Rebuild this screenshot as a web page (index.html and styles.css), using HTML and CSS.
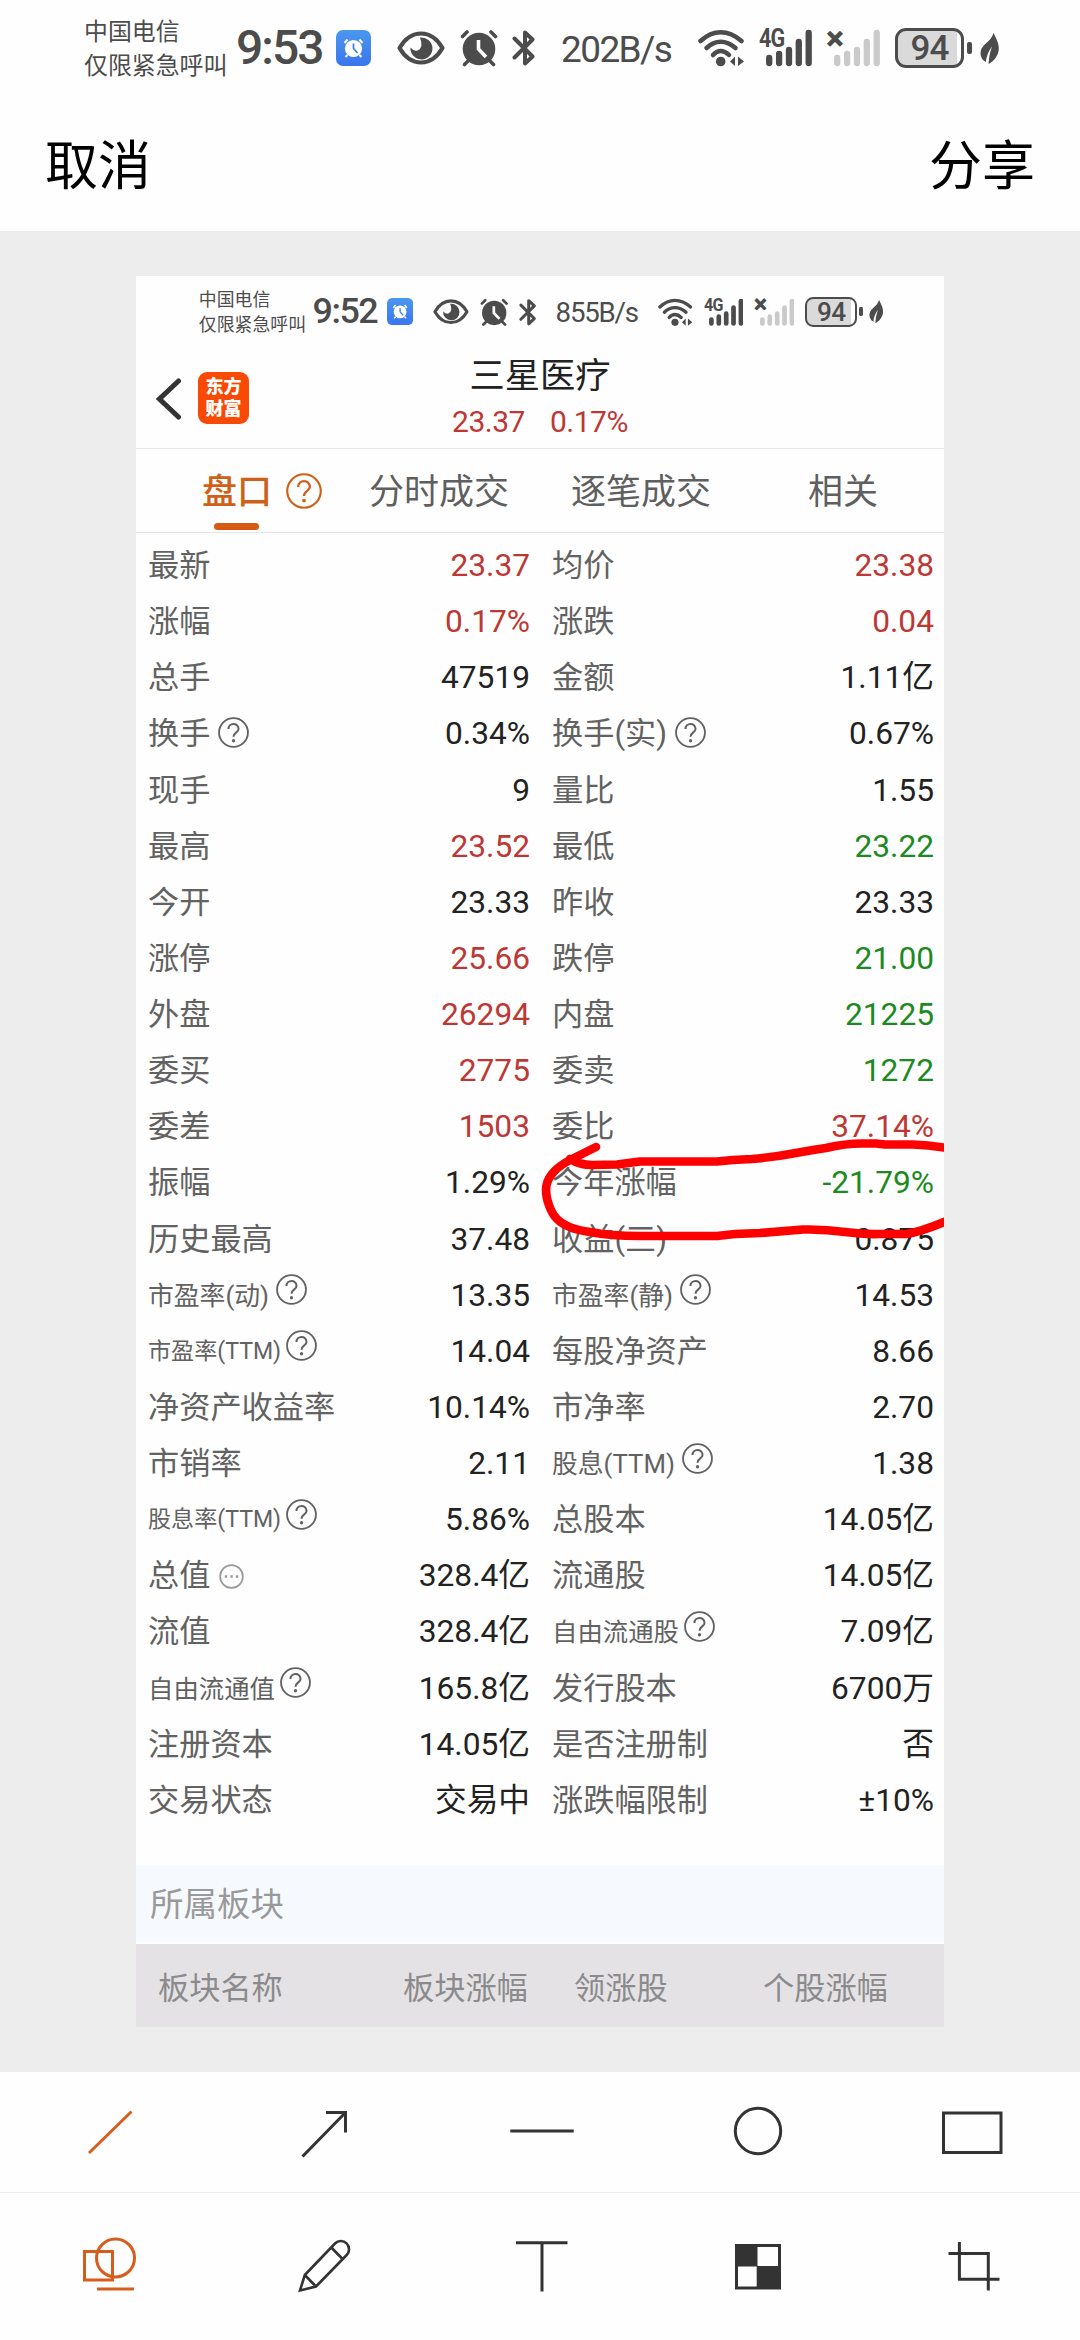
FILE: index.html
```html
<!DOCTYPE html>
<html lang="zh-CN">
<head>
    <meta charset="UTF-8">
    <meta name="viewport" content="width=device-width, initial-scale=1.0">
    <title>分享截图</title>
    <link rel="stylesheet" href="styles.css">
</head>
<body>

    <!-- Shared icons -->
    <svg class="sprite">
        <defs>
            <linearGradient id="blue" x1="0" y1="0" x2="0" y2="1">
                <stop offset="0" stop-color="#4b97ef"/>
                <stop offset="1" stop-color="#3a75ee"/>
            </linearGradient>
        </defs>
        <symbol id="i-alarm" viewBox="0 0 38 38">
            <circle cx="19" cy="20" r="16.3" fill="currentColor"/>
            <path d="M2.5 7.5L7 3M35.5 7.5L31 3M8 32L4.500 35.500M30 32L33.500 35.500" fill="none" stroke="currentColor" stroke-width="3.600" stroke-linecap="round"/>
            <path class="hand" d="M18.500 11V20L26 28" fill="none" stroke-width="3.600"/>
        </symbol>
        <symbol id="i-app" viewBox="0 0 35 36">
            <rect width="35" height="36" rx="7" fill="url(#blue)"/>
            <circle cx="17.500" cy="18.500" r="8.600" fill="#fff"/>
            <path d="M8.500 13L11.500 9.500M26.500 13L23.500 9.500M11.500 25L9.500 27M23.500 25L25.500 27" stroke="#fff" stroke-width="2"/>
            <path d="M17.500 13.500V18.500L21.500 23" fill="none" stroke="#3f82ee" stroke-width="1.800"/>
        </symbol>
        <symbol id="i-eye" viewBox="0 0 48 34">
            <path d="M2.500 17Q11 2.500 24 2.500T45.500 17Q37 31.500 24 31.500T2.500 17Z" fill="none" stroke="currentColor" stroke-width="4.200" stroke-linejoin="round"/>
            <path d="M23 6.500A11 11 0 1 1 13.500 16.500Q16.500 20.500 20.500 19.500Q27 17 23 6.500Z" fill="currentColor"/>
        </symbol>
        <symbol id="i-bt" viewBox="0 0 24 38">
            <path d="M2.500 9.500L20.500 27.500L13 34.500V3.500L20.500 10.500L2.500 28.500" fill="none" stroke="currentColor" stroke-width="4" stroke-linecap="round" stroke-linejoin="round"/>
        </symbol>
        <symbol id="i-wifi" viewBox="0 0 46 38">
            <g fill="none" stroke="currentColor" stroke-width="4.500" stroke-linecap="round">
                <path d="M2.500 12Q12 3.200 22.700 3.200T43.500 12"/>
                <path d="M8.500 19Q15 12.800 22.700 12.800T37.500 19"/>
                <path d="M15 26Q18.500 22 22.700 22T31 26"/>
            </g>
            <circle cx="22.700" cy="32.500" r="4.800" fill="currentColor"/>
            <path d="M37 27.500V37L32 32.500ZM40 27.500V37L46 32.500Z" fill="currentColor"/>
        </symbol>
        <symbol id="i-bars" viewBox="0 0 46 38">
            <path d="M3.200 29V34M13.100 25V34M23 21V34M32.800 13V34M42.700 4V34" stroke="currentColor" stroke-width="6.300" stroke-linecap="round"/>
        </symbol>
        <symbol id="i-leaf" viewBox="0 0 20 31">
            <path d="M13.500 0C17 7 19 11 18.800 16C18.500 23 13 29 8.500 31C9 25 9.500 20 12 13.500C8.500 18 6.500 23 5.800 29C1.500 27 0 22 .8 18C2 11 11 9 13.500 0Z" fill="currentColor"/>
        </symbol>
        <symbol id="i-help" viewBox="0 0 32 32">
            <circle cx="16" cy="16" r="14.900" fill="none" stroke="currentColor" stroke-width="1.900"/>
            <path d="M10.800 12.500C10.800 5.500 21.200 5.500 21.200 12.300C21.200 16 16 15.800 16 20.500" fill="none" stroke="currentColor" stroke-width="2.100"/>
            <circle cx="16" cy="24.500" r="1.700" fill="currentColor"/>
        </symbol>
    </svg>

    <div class="status-bar">
        <div class="carrier">中国电信<br>仅限紧急呼叫</div>
        <div class="time">9:53</div>
        <svg class="s-app"><use href="#i-app"/></svg>
        <svg class="s-eye"><use href="#i-eye"/></svg>
        <svg class="s-alarm"><use href="#i-alarm"/></svg>
        <svg class="s-bt"><use href="#i-bt"/></svg>
        <div class="speed">202B/s</div>
        <svg class="s-wifi"><use href="#i-wifi"/></svg>
        <div class="signal"><span class="net">4G</span><svg><use href="#i-bars"/></svg></div>
        <div class="signal none"><span class="net">×</span><svg><use href="#i-bars"/></svg></div>
        <div class="battery">94</div>
        <svg class="s-leaf"><use href="#i-leaf"/></svg>
    </div>

    <div class="nav">
        <span>取消</span>
        <span>分享</span>
    </div>

    <div class="canvas">
        <div class="shot">
            <div class="status-bar small">
                <div class="carrier">中国电信<br>仅限紧急呼叫</div>
                <div class="time">9:52</div>
                <svg class="s-app"><use href="#i-app"/></svg>
                <svg class="s-eye"><use href="#i-eye"/></svg>
                <svg class="s-alarm"><use href="#i-alarm"/></svg>
                <svg class="s-bt"><use href="#i-bt"/></svg>
                <div class="speed">855B/s</div>
                <svg class="s-wifi"><use href="#i-wifi"/></svg>
                <div class="signal"><span class="net">4G</span><svg><use href="#i-bars"/></svg></div>
                <div class="signal none"><span class="net">×</span><svg><use href="#i-bars"/></svg></div>
                <div class="battery">94</div>
                <svg class="s-leaf"><use href="#i-leaf"/></svg>
            </div>

            <div class="stock-header">
                <div class="header-left">
                    <svg class="back" viewBox="0 0 26 42"><path d="M22.500 3L3.500 21L22.500 39" fill="none" stroke="#333" stroke-width="5" stroke-linecap="round"/></svg>
                    <div class="logo">东方<br>财富</div>
                </div>
                <div class="header-title">
                    <div class="name">三星医疗</div>
                    <div class="price"><span>23.37</span><span>0.17%</span></div>
                </div>
                <div class="header-right"></div>
            </div>

            <div class="tabs">
                <div class="tab active">盘口<svg class="tab-help"><use href="#i-help"/></svg></div>
                <div class="tab">分时成交</div>
                <div class="tab">逐笔成交</div>
                <div class="tab">相关</div>
            </div>

            <div class="quotes">
                <div class="cell"><span>最新</span><b class="up">23.37</b></div>
                <div class="cell"><span>均价</span><b class="up">23.38</b></div>
                <div class="cell"><span>涨幅</span><b class="up">0.17%</b></div>
                <div class="cell"><span>涨跌</span><b class="up">0.04</b></div>
                <div class="cell"><span>总手</span><b>47519</b></div>
                <div class="cell"><span>金额</span><b>1.11亿</b></div>
                <div class="cell"><span>换手</span><svg class="help"><use href="#i-help"/></svg><b>0.34%</b></div>
                <div class="cell"><span>换手(实)</span><svg class="help"><use href="#i-help"/></svg><b>0.67%</b></div>
                <div class="cell"><span>现手</span><b>9</b></div>
                <div class="cell"><span>量比</span><b>1.55</b></div>
                <div class="cell"><span>最高</span><b class="up">23.52</b></div>
                <div class="cell"><span>最低</span><b class="down">23.22</b></div>
                <div class="cell"><span>今开</span><b>23.33</b></div>
                <div class="cell"><span>昨收</span><b>23.33</b></div>
                <div class="cell"><span>涨停</span><b class="up">25.66</b></div>
                <div class="cell"><span>跌停</span><b class="down">21.00</b></div>
                <div class="cell"><span>外盘</span><b class="up">26294</b></div>
                <div class="cell"><span>内盘</span><b class="down">21225</b></div>
                <div class="cell"><span>委买</span><b class="up">2775</b></div>
                <div class="cell"><span>委卖</span><b class="down">1272</b></div>
                <div class="cell"><span>委差</span><b class="up">1503</b></div>
                <div class="cell"><span>委比</span><b class="up">37.14%</b></div>
                <div class="cell"><span>振幅</span><b>1.29%</b></div>
                <div class="cell"><span>今年涨幅</span><b class="down">-21.79%</b></div>
                <div class="cell"><span>历史最高</span><b>37.48</b></div>
                <div class="cell"><span>收益(三)</span><b>0.875</b></div>
                <div class="cell mid"><span>市盈率(动)</span><svg class="help"><use href="#i-help"/></svg><b>13.35</b></div>
                <div class="cell mid"><span>市盈率(静)</span><svg class="help"><use href="#i-help"/></svg><b>14.53</b></div>
                <div class="cell tiny"><span>市盈率(TTM)</span><svg class="help"><use href="#i-help"/></svg><b>14.04</b></div>
                <div class="cell"><span>每股净资产</span><b>8.66</b></div>
                <div class="cell"><span>净资产收益率</span><b>10.14%</b></div>
                <div class="cell"><span>市净率</span><b>2.70</b></div>
                <div class="cell"><span>市销率</span><b>2.11</b></div>
                <div class="cell mid"><span>股息(TTM)</span><svg class="help"><use href="#i-help"/></svg><b>1.38</b></div>
                <div class="cell tiny"><span>股息率(TTM)</span><svg class="help"><use href="#i-help"/></svg><b>5.86%</b></div>
                <div class="cell"><span>总股本</span><b>14.05亿</b></div>
                <div class="cell"><span>总值</span><svg class="more" viewBox="0 0 26 26"><circle cx="13" cy="13" r="11.800" fill="none" stroke="#999" stroke-width="1.800"/><path d="M6 13h2.500M11.800 13h2.500M17.500 13h2.500" stroke="#999" stroke-width="2.500"/></svg><b>328.4亿</b></div>
                <div class="cell"><span>流通股</span><b>14.05亿</b></div>
                <div class="cell"><span>流值</span><b>328.4亿</b></div>
                <div class="cell free"><span>自由流通股</span><svg class="help"><use href="#i-help"/></svg><b>7.09亿</b></div>
                <div class="cell free"><span>自由流通值</span><svg class="help"><use href="#i-help"/></svg><b>165.8亿</b></div>
                <div class="cell"><span>发行股本</span><b>6700万</b></div>
                <div class="cell"><span>注册资本</span><b>14.05亿</b></div>
                <div class="cell"><span>是否注册制</span><b>否</b></div>
                <div class="cell"><span>交易状态</span><b>交易中</b></div>
                <div class="cell"><span>涨跌幅限制</span><b>±10%</b></div>
            </div>

            <div class="section-title">所属板块</div>
            <div class="board-head">
                <span class="c1">板块名称</span>
                <span class="c2">板块涨幅</span>
                <span class="c3">领涨股</span>
                <span class="c4">个股涨幅</span>
            </div>

            <!-- Hand-drawn mark -->
            <svg class="mark" viewBox="536 1136 408 108">
                <path d="M596 1147L572 1159C558 1166 546 1176 546 1190C546 1200 551 1213 557 1219C563 1225 575 1230 590 1232C605 1235 620 1236 640 1236H717L735 1234L760 1233L803 1229.500Q825 1229 845 1232Q862 1234.500 880 1234H906Q920 1232 944 1222L960 1216"/>
                <path d="M570 1159Q580 1165 592 1165L617 1164.500L640 1161.500H717L733 1160L752 1159Q775 1157 793 1153.500L813 1150L826 1148Q845 1143.500 862 1143.500H876L885 1144.500H913Q928 1145 944 1147.500L960 1150"/>
            </svg>
        </div>
    </div>

    <div class="tools shapes">
        <div class="tool active"><svg viewBox="0 0 80 80"><path d="M21 61L63.500 19.500"/></svg></div>
        <div class="tool"><svg viewBox="0 0 80 80"><path d="M18.500 64.500L61.500 20.500M42 20.500H61.500V40.500"/></svg></div>
        <div class="tool"><svg viewBox="0 0 80 80"><path d="M10.300 39H73.700"/></svg></div>
        <div class="tool"><svg viewBox="0 0 80 80"><circle cx="42" cy="39" r="22.700"/></svg></div>
        <div class="tool"><svg viewBox="0 0 80 80"><rect x="11.500" y="21" width="57.500" height="39.500"/></svg></div>
    </div>
    <div class="tools modes">
        <div class="tool active"><svg viewBox="0 0 80 80"><rect x="16.500" y="25.500" width="28" height="28.500"/><circle cx="47.500" cy="32" r="19"/><path d="M29 63H66"/></svg></div>
        <div class="tool thin"><svg viewBox="0 0 80 80"><path d="M16 64.500L20.800 49L51 17.500A8.200 8.200 0 0 1 62.700 29L32 60.500ZM20.800 49L32 60.500M47.300 21.500L58.600 33"/></svg></div>
        <div class="tool"><svg viewBox="0 0 80 80"><path d="M16 16.700H67.500M42 16.700V65.500"/></svg></div>
        <div class="tool"><svg viewBox="0 0 80 80"><rect x="20.500" y="19.500" width="43" height="42.500"/><path class="fill" d="M20 19H41.500V62H20ZM41.500 40H63V62H41.500Z"/><path class="blank" d="M22 40.500H40.700V60.500H22Z"/></svg></div>
        <div class="tool"><svg viewBox="0 0 80 80"><path d="M27.400 16V53.200H67.500M16.500 27.400H56.300V64.500"/></svg></div>
    </div>

</body>
</html>
```
FILE: styles.css
```css
* {
    box-sizing: border-box;
}

body {
    margin: 0;
    width: 1080px;
    height: 2340px;
    display: flex;
    flex-direction: column;
    overflow: hidden;
    font-family: Roboto, "Noto Sans CJK SC", sans-serif;
    background: #fefefe;
    color: #222;
}

svg {
    display: block;
    flex-shrink: 0;
}

.sprite {
    position: absolute;
    width: 0;
    height: 0;
}

/* Status bar */
.status-bar {
    width: 1080px;
    height: 96px;
    flex-shrink: 0;
    display: flex;
    align-items: center;
    padding-left: 84px;
    color: #4c4c4c;
    white-space: nowrap;
}

.status-bar.small {
    zoom: 0.748;
}

.carrier {
    width: 152px;
    padding-top: 1px;
    font-size: 23.9px;
    line-height: 34px;
}

.time {
    width: 100px;
    font-size: 48px;
    font-weight: 500;
    letter-spacing: -2px;
    line-height: 96px;
}

.s-app {
    width: 35px;
    height: 36px;
}

.s-eye {
    width: 48px;
    height: 34px;
    margin-left: 26px;
}

.s-alarm {
    width: 38px;
    height: 38px;
    margin-left: 15px;
}

.hand {
    stroke: #fefefe;
}

.s-bt {
    width: 24px;
    height: 38px;
    margin-left: 14px;
}

.speed {
    width: 136px;
    margin-left: 25px;
    padding-top: 2px;
    font-size: 37px;
    letter-spacing: -1.6px;
}

.s-wifi {
    width: 46px;
    height: 38px;
    margin-right: 15px;
    margin-left: 1px;
}

.signal {
    position: relative;
    width: 54px;
    height: 38px;
    margin-right: 14px;
    padding-left: 7px;
}

.signal svg {
    width: 46px;
    height: 38px;
}

.signal.none svg {
    color: #cacaca;
}

.net {
    position: absolute;
    left: 0;
    top: 0;
    font-size: 25px;
    font-weight: 700;
    line-height: 20px;
    letter-spacing: -1px;
    transform: scaleX(0.86);
    transform-origin: left;
}

.signal.none .net {
    left: -1px;
    top: -1px;
    font-size: 34px;
    font-weight: 900;
    transform: none;
}

.battery {
    position: relative;
    width: 69px;
    height: 40px;
    border: 3px solid #4c4c4c;
    border-radius: 11px;
    background: linear-gradient(to right, #dadada 59px, #fefefe 59px);
    text-align: center;
    font-size: 35px;
    font-weight: 500;
    line-height: 36px;
    letter-spacing: -1px;
}

.battery::after {
    content: "";
    position: absolute;
    right: -11px;
    top: 11px;
    width: 5px;
    height: 12px;
    border-radius: 2px;
    background: #4c4c4c;
}

.s-leaf {
    width: 20px;
    height: 31px;
    margin-left: 16px;
}

/* Top nav */
.nav {
    height: 135px;
    flex-shrink: 0;
    display: flex;
    justify-content: space-between;
    align-items: center;
    padding: 0 45px 3px 45px;
    font-size: 53px;
    color: #000;
}

/* Picture area */
.canvas {
    height: 1841px;
    flex-shrink: 0;
    padding: 45px 136px;
    background: #ededed;
}

.shot {
    position: relative;
    height: 1751px;
    display: flex;
    flex-direction: column;
    overflow: hidden;
    background: #fefefe;
}

.stock-header {
    flex: 1;
    display: flex;
    border-bottom: 1px solid #e4e4e4;
}

.header-left,
.header-right {
    width: 200px;
}

.header-left {
    display: flex;
    align-items: flex-start;
    padding: 24px 0 0 20px;
}

.back {
    width: 26px;
    height: 42px;
    margin: 6px 16px 0 0;
}

.logo {
    width: 51px;
    height: 52px;
    padding-top: 4px;
    border-radius: 9px;
    background: #f94a05;
    color: #fff;
    font-size: 18px;
    font-weight: 900;
    line-height: 22px;
    text-align: center;
}

.header-title {
    flex: 1;
    text-align: center;
}

.name {
    margin-top: 4px;
    font-size: 35.3px;
    line-height: 48px;
}

.price {
    display: flex;
    justify-content: center;
    gap: 25px;
    margin-top: -1px;
    font-size: 30px;
    line-height: 46px;
    letter-spacing: -0.5px;
    color: #bd3835;
}

.tabs {
    height: 84px;
    flex-shrink: 0;
    display: flex;
    border-bottom: 1px solid #e4e4e4;
}

.tab {
    position: relative;
    flex: 1;
    text-align: center;
    font-size: 35px;
    line-height: 88px;
    color: #5f5f5f;
}

.tab.active {
    color: #cf6018;
    font-weight: 500;
}

.tab.active::after {
    content: "";
    position: absolute;
    left: 78px;
    bottom: 2px;
    width: 45px;
    height: 7px;
    border-radius: 4px;
    background: #d75a12;
}

.tab-help {
    position: absolute;
    left: 150px;
    top: 24px;
    width: 36px;
    height: 36px;
}

/* Quote table */
.quotes {
    height: 1332px;
    flex-shrink: 0;
    display: grid;
    grid-template-columns: 404px 404px;
    grid-auto-rows: 56.13px;
    padding-top: 5px;
}

.cell {
    display: flex;
    align-items: center;
    padding: 0 10px 0 12px;
    white-space: nowrap;
}

.cell span {
    font-size: 31.2px;
    line-height: 56px;
    color: #626262;
}

.cell b {
    margin-left: auto;
    font-size: 31.7px;
    font-weight: 400;
    line-height: 56px;
}

.cell .up {
    color: #bd3835;
}

.cell .down {
    color: #1d8a1f;
}

.cell.mid span {
    font-size: 25.8px;
}

.cell.free span {
    font-size: 25.4px;
}

.cell.tiny span {
    font-size: 23.1px;
}

.help {
    width: 31px;
    height: 31px;
    margin: 0 0 4px 8px;
    color: #626262;
}

.mid .help,
.free .help,
.tiny .help {
    margin: 0 0 12px 7px;
}

.free .help,
.tiny .help {
    margin-left: 5px;
}

.more {
    width: 25px;
    height: 25px;
    margin-left: 9px;
}

.section-title {
    height: 77px;
    flex-shrink: 0;
    padding-left: 14px;
    background: #f6faff;
    font-size: 33.5px;
    line-height: 79px;
    color: #999;
}

.board-head {
    height: 83px;
    flex-shrink: 0;
    margin-top: 2px;
    display: flex;
    background: #e4e2e5;
    font-size: 31.2px;
    line-height: 90px;
    color: #8b8a8c;
}

.c1 {
    width: 245px;
    padding-left: 22px;
}

.c2 {
    width: 193px;
    padding-left: 22px;
}

.c3 {
    width: 189px;
}

.mark {
    position: absolute;
    right: 0;
    top: 860px;
    width: 408px;
    height: 108px;
    fill: none;
    stroke: #fe0000;
    stroke-width: 8.6;
    stroke-linecap: round;
    stroke-linejoin: round;
}

/* Bottom tools */
.tools {
    display: flex;
    align-items: center;
    flex-shrink: 0;
}

.shapes {
    height: 120px;
}

.modes {
    height: 148px;
    padding-bottom: 1px;
    border-top: 1px solid #ececec;
}

.tool {
    flex: 1;
    display: flex;
    justify-content: center;
}

.tool svg {
    width: 80px;
    height: 80px;
    fill: none;
    stroke: #333;
    stroke-width: 3;
}

.tool.active svg {
    stroke: #d65d1e;
}

.tool.thin svg {
    stroke-width: 2.6;
}

.tool .fill {
    fill: #333;
    stroke: none;
}

.tool .blank {
    fill: #fefefe;
    stroke: none;
}
```
